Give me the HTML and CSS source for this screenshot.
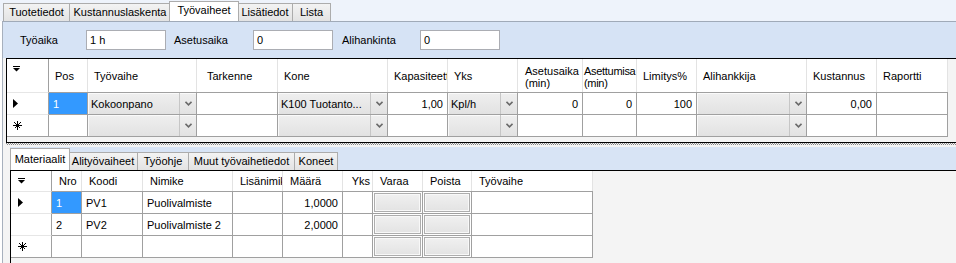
FILE: index.html
```html
<!DOCTYPE html>
<html lang="fi">
<head>
  <meta charset="UTF-8">
  <title>Työvaiheet</title>
  <link rel="stylesheet" href="styles.css">
</head>
<body>
<div class="app">

  <div class="tabs main-tabs">
    <div class="tab tab-tuote">Tuotetiedot</div>
    <div class="tab tab-kust">Kustannuslaskenta</div>
    <div class="tab tab-tyo active">Työvaiheet</div>
    <div class="tab tab-lisa">Lisätiedot</div>
    <div class="tab tab-lista">Lista</div>
  </div>

  <div class="page">
    <div class="params">
      <span class="lbl lbl-tyoaika">Työaika</span>
      <input class="field" type="text" value="1 h" readonly>
      <span class="lbl lbl-aset">Asetusaika</span>
      <input class="field" type="text" value="0" readonly>
      <span class="lbl lbl-ali">Alihankinta</span>
      <input class="field" type="text" value="0" readonly>
    </div>

    <!-- työvaiheet grid -->
    <div class="grid ops">
      <div class="gtable ops-table">
        <div class="corner"><svg width="7" height="6" viewBox="0 0 7 6"><rect width="7" height="1"/><path d="M0 2H7L3.5 5.5Z"/></svg></div>
        <div class="h">Pos</div>
        <div class="h">Työvaihe</div>
        <div class="h h-wide">Tarkenne</div>
        <div class="h">Kone</div>
        <div class="h">Kapasiteetti</div>
        <div class="h">Yks</div>
        <div class="h two">Asetusaika<br>(min)</div>
        <div class="h two tight">Asettumisa<br>(min)</div>
        <div class="h">Limitys%</div>
        <div class="h">Alihankkija</div>
        <div class="h">Kustannus</div>
        <div class="h">Raportti</div>

        <div class="rh"><svg width="5" height="9" viewBox="0 0 5 9"><path d="M0 0L5 4.5L0 9Z"/></svg></div>
        <div class="d sel">1</div>
        <div class="d combo"><span class="val">Kokoonpano</span><span class="drop"><svg width="7" height="5" viewBox="0 0 7 5"><path d="M0.5 0.8L3.5 3.8L6.5 0.8" fill="none" stroke="#6a6a6a" stroke-width="1.6"/></svg></span></div>
        <div class="d"></div>
        <div class="d combo"><span class="val">K100 Tuotanto...</span><span class="drop"><svg width="7" height="5" viewBox="0 0 7 5"><path d="M0.5 0.8L3.5 3.8L6.5 0.8" fill="none" stroke="#6a6a6a" stroke-width="1.6"/></svg></span></div>
        <div class="d num">1,00</div>
        <div class="d combo"><span class="val">Kpl/h</span><span class="drop"><svg width="7" height="5" viewBox="0 0 7 5"><path d="M0.5 0.8L3.5 3.8L6.5 0.8" fill="none" stroke="#6a6a6a" stroke-width="1.6"/></svg></span></div>
        <div class="d num">0</div>
        <div class="d num">0</div>
        <div class="d num">100</div>
        <div class="d combo"><span class="val"></span><span class="drop"><svg width="7" height="5" viewBox="0 0 7 5"><path d="M0.5 0.8L3.5 3.8L6.5 0.8" fill="none" stroke="#6a6a6a" stroke-width="1.6"/></svg></span></div>
        <div class="d num">0,00</div>
        <div class="d"></div>

        <div class="rh"><svg width="9" height="9" viewBox="0 0 9 9" shape-rendering="crispEdges"><path d="M4.5 0V9M0 4.5H9M1.5 1.5L7.5 7.5M7.5 1.5L1.5 7.5" stroke="#000" stroke-width="1" fill="none"/></svg></div>
        <div class="d"></div>
        <div class="d combo"><span class="val"></span><span class="drop"><svg width="7" height="5" viewBox="0 0 7 5"><path d="M0.5 0.8L3.5 3.8L6.5 0.8" fill="none" stroke="#6a6a6a" stroke-width="1.6"/></svg></span></div>
        <div class="d"></div>
        <div class="d combo"><span class="val"></span><span class="drop"><svg width="7" height="5" viewBox="0 0 7 5"><path d="M0.5 0.8L3.5 3.8L6.5 0.8" fill="none" stroke="#6a6a6a" stroke-width="1.6"/></svg></span></div>
        <div class="d"></div>
        <div class="d combo"><span class="val"></span><span class="drop"><svg width="7" height="5" viewBox="0 0 7 5"><path d="M0.5 0.8L3.5 3.8L6.5 0.8" fill="none" stroke="#6a6a6a" stroke-width="1.6"/></svg></span></div>
        <div class="d"></div>
        <div class="d"></div>
        <div class="d"></div>
        <div class="d combo"><span class="val"></span><span class="drop"><svg width="7" height="5" viewBox="0 0 7 5"><path d="M0.5 0.8L3.5 3.8L6.5 0.8" fill="none" stroke="#6a6a6a" stroke-width="1.6"/></svg></span></div>
        <div class="d"></div>
        <div class="d"></div>
      </div>
    </div>

    <div class="splitter"></div>

    <div class="sub">
      <div class="tabs sub-tabs">
        <div class="tab tab-mat active">Materiaalit</div>
        <div class="tab tab-ali">Alityövaiheet</div>
        <div class="tab tab-ohje">Työohje</div>
        <div class="tab tab-muut">Muut työvaihetiedot</div>
        <div class="tab tab-kon">Koneet</div>
      </div>

      <!-- materiaalit grid -->
      <div class="grid mats">
        <div class="gtable mats-table">
          <div class="corner"><svg width="7" height="6" viewBox="0 0 7 6"><rect width="7" height="1"/><path d="M0 2H7L3.5 5.5Z"/></svg></div>
          <div class="h">Nro</div>
          <div class="h">Koodi</div>
          <div class="h">Nimike</div>
          <div class="h">Lisänimike</div>
          <div class="h">Määrä</div>
          <div class="h right">Yks</div>
          <div class="h">Varaa</div>
          <div class="h">Poista</div>
          <div class="h">Työvaihe</div>

          <div class="rh"><svg width="5" height="9" viewBox="0 0 5 9"><path d="M0 0L5 4.5L0 9Z"/></svg></div>
          <div class="d sel">1</div>
          <div class="d">PV1</div>
          <div class="d">Puolivalmiste</div>
          <div class="d"></div>
          <div class="d num">1,0000</div>
          <div class="d"></div>
          <div class="d btncell"><span class="btn"></span></div>
          <div class="d btncell"><span class="btn"></span></div>
          <div class="d"></div>

          <div class="rh"></div>
          <div class="d">2</div>
          <div class="d">PV2</div>
          <div class="d">Puolivalmiste 2</div>
          <div class="d"></div>
          <div class="d num">2,0000</div>
          <div class="d"></div>
          <div class="d btncell"><span class="btn"></span></div>
          <div class="d btncell"><span class="btn"></span></div>
          <div class="d"></div>

          <div class="rh"><svg width="9" height="9" viewBox="0 0 9 9" shape-rendering="crispEdges"><path d="M4.5 0V9M0 4.5H9M1.5 1.5L7.5 7.5M7.5 1.5L1.5 7.5" stroke="#000" stroke-width="1" fill="none"/></svg></div>
          <div class="d"></div>
          <div class="d"></div>
          <div class="d"></div>
          <div class="d"></div>
          <div class="d"></div>
          <div class="d"></div>
          <div class="d btncell"><span class="btn"></span></div>
          <div class="d btncell"><span class="btn"></span></div>
          <div class="d"></div>
        </div>
      </div>
    </div>
  </div>

</div>
</body>
</html>
```

FILE: styles.css
```css
* {
  box-sizing: border-box;
}
body {
  margin: 0;
  font-family: "Liberation Sans", Arial, sans-serif;
  font-size: 11px;
  color: #000;
  background: #fff;
  overflow: hidden;
}
.app {
  width: 956px;
  height: 263px;
  overflow: hidden;
}

/* tabs */
.tabs {
  display: flex;
  align-items: flex-end;
}
.main-tabs {
  height: 21px;
  padding-left: 3px;
  background: #eef3fb;
}
.sub-tabs {
  height: 23px;
  background: #d8e4f5;
}
.tab {
  flex: none;
  height: 18px;
  margin-right: -1px;
  border: 1px solid #acacac;
  border-bottom: none;
  background: linear-gradient(#f3f3f3, #e3e3e3);
  text-align: center;
  line-height: 17px;
  white-space: nowrap;
}
.tab.active {
  height: 20px;
  margin-left: -1px;
  margin-right: -2px;
  background: #fff;
  position: relative;
  z-index: 1;
}
.sub-tabs .tab.active {
  height: 22px;
  margin-left: 0;
  line-height: 20px;
}
.tab-tuote { width: 67px; }
.tab-kust { width: 102px; }
.tab-tyo { width: 70px; }
.tab-lisa { width: 56px; }
.tab-lista { width: 39px; }
.tab-mat { width: 60px; }
.tab-ali { width: 70px; }
.tab-ohje { width: 52px; }
.tab-muut { width: 107px; }
.tab-kon { width: 44px; }

.page {
  margin-left: 2px;
  border-left: 1px solid #a7b0bd;
  border-top: 1px solid #a0aab8;
  background: #f4f4f4;
  height: 242px;
}

/* parameter strip */
.params {
  height: 36px;
  display: flex;
  align-items: center;
  padding-left: 17px;
  background: #d6e3f5;
}
.lbl {
  flex: none;
}
.lbl-tyoaika { width: 66px; }
.lbl-aset { width: 79px; margin-left: 8px; }
.lbl-ali { width: 78px; margin-left: 9px; }
.field {
  flex: none;
  width: 80px;
  height: 20px;
  margin: 0;
  padding: 0 3px;
  border: 1px solid #abadb3;
  background: #fff;
  font: inherit;
  color: #000;
  outline: none;
}

/* data grids */
.grid {
  border-top: 1px solid #000;
  border-left: 1px solid #000;
  background: #f4f4f4;
  overflow: hidden;
}
.ops {
  margin-left: 3px;
  height: 85px;
  border-bottom: 1px solid #000;
}
.mats {
  height: 100px;
}
.gtable {
  display: grid;
  width: max-content;
  border-bottom: 1px solid #a0a0a0;
}
.ops-table {
  grid-template-columns: 42px 39px 109px 81px 110px 60px 70px 65px 54px 60px 110px 70px 71px;
  grid-template-rows: 33px 22px 22px;
}
.mats-table {
  grid-template-columns: 41px 30px 61px 90px 50px 60px 30px 50px 49px 121px;
  grid-template-rows: 20px 22px 22px 22px;
}
.corner {
  background: #fff;
  border-right: 1px solid #a0a0a0;
  padding: 7px 6px;
  line-height: 0;
}
.mats .corner {
  padding: 7px 7px;
}
.h {
  background: #fff;
  border-right: 1px solid #e3e3e3;
  display: flex;
  align-items: center;
  padding: 0 6px;
  white-space: nowrap;
  overflow: hidden;
}
.mats .h {
  padding: 0 7px;
}
.h-wide {
  padding-left: 10px;
}
.h.two {
  line-height: 12px;
  padding-top: 3px;
  padding-left: 7px;
}
.h.tight {
  padding-left: 1px;
  padding-right: 0;
  letter-spacing: -0.3px;
}
.mats .h.right {
  justify-content: flex-end;
  padding-right: 2px;
}
.rh {
  background: #fff;
  border-right: 1px solid #a0a0a0;
  border-top: 1px solid #e6e6e6;
  display: flex;
  align-items: center;
  padding-left: 6px;
}
.mats .rh {
  padding-left: 7px;
}
.d {
  background: #fff;
  border-right: 1px solid #a0a0a0;
  border-top: 1px solid #a0a0a0;
  display: flex;
  align-items: center;
  padding: 0 4px;
  white-space: nowrap;
  overflow: hidden;
}
.num {
  justify-content: flex-end;
}
.sel {
  background: #3399ff;
  color: #fff;
}
.combo {
  padding: 0;
  background: linear-gradient(#efefef, #e2e2e2);
  box-shadow: inset 1px 1px 0 #fafafa;
}
.combo .val {
  flex: 1;
  padding-left: 3px;
  overflow: hidden;
}
.combo .drop {
  flex: none;
  width: 17px;
  height: 100%;
  border-left: 1px solid #c6c6c6;
  display: flex;
  align-items: center;
  justify-content: center;
}
.btncell {
  padding: 1px;
}
.btn {
  flex: 1;
  height: 100%;
  border: 1px solid #adadad;
  background: linear-gradient(#f0f0f0, #e3e3e3);
  box-shadow: inset 0 0 0 1px #f8f8f8;
}

/* splitter between the grids */
.splitter {
  margin-left: 3px;
  height: 4px;
  background:
    repeating-linear-gradient(90deg, #8a8a8a 0 1px, #f4f4f4 1px 2px) 0 0 / 100% 1px no-repeat,
    repeating-linear-gradient(90deg, #f4f4f4 0 1px, #8a8a8a 1px 2px) 0 1px / 100% 1px no-repeat,
    #f4f4f4;
}
.sub {
  padding-left: 7px;
}
```
